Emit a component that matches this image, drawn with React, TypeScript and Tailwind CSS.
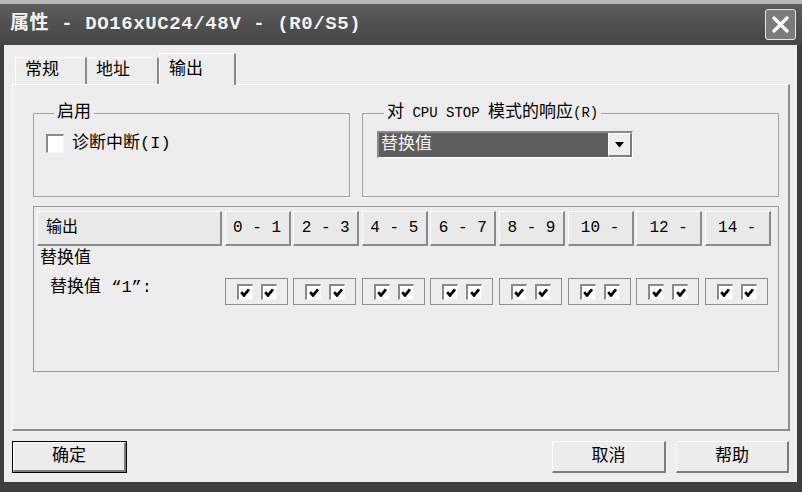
import React from "react";

const font = "font-['Liberation_Mono','Noto_Sans_CJK_SC',monospace]";

const ranges = ["0 - 1", "2 - 3", "4 - 5", "6 - 7", "8 - 9", "10 -", "12 -", "14 -"];

const Tick = () => (
  <svg width="10" height="9" viewBox="0 0 10 9">
    <path d="M1.2 4.2 L4 7.4 L9 1.3" fill="none" stroke="#000" strokeWidth="2.8" />
  </svg>
);

const Box = ({ checked, size = "w-[16px] h-[16px]" }: { checked?: boolean; size?: string }) => (
  <span
    className={`${size} flex items-center justify-center bg-white border-t-2 border-l-2 border-b border-r border-t-[#8a8a8a] border-l-[#8a8a8a] border-b-[#f6f6f6] border-r-[#f6f6f6]`}
  >
    {checked && <Tick />}
  </span>
);

const Button = ({ label, primary, w }: { label: string; primary?: boolean; w: string }) => (
  <button
    type="button"
    className={`${w} h-[32px] ${primary ? "border border-black" : ""} bg-[#ececec]`}
  >
    <span
      className={`h-full w-full flex items-center justify-center border-t border-l border-white border-b-2 border-r-2 border-b-[#7c7c7c] border-r-[#7c7c7c] text-[17px] text-black ${font}`}
    >
      {label}
    </span>
  </button>
);

export default function App() {
  return (
    <div className="w-[802px] h-[492px] flex flex-col bg-[#3e3e3e] overflow-hidden">
      <div className="h-[4px] bg-[#b8b8b8]" />

      {/* title bar */}
      <div className="h-[41px] flex items-center justify-between pl-[10px] pr-[6px] bg-linear-to-b from-[#5c5c5c] to-[#454545]">
        <span className={`text-[19px] font-bold text-[#f2f2f2] tracking-[0.6px] ${font}`}>
          属性 - DO16xUC24/48V - (R0/S5)
        </span>
        <span className="w-[31px] h-[31px] rounded-[3px] border border-[#e6e6e6] bg-[#7b7b7b] flex items-center justify-center">
          <svg width="17" height="17" viewBox="0 0 17 17">
            <path d="M2 2 L15 15 M15 2 L2 15" stroke="#fff" strokeWidth="3.2" strokeLinecap="round" />
          </svg>
        </span>
      </div>

      {/* window body */}
      <div className="h-[437px] ml-[4px] mr-[5px] bg-[#ededed] flex flex-col">
        {/* tabs */}
        <div className="h-[39px] pl-[11px] flex items-end">
          <div className={`w-[72px] h-[27px] border-t border-l border-white border-r-2 border-r-[#8a8a8a] flex items-center pl-[9px] text-[17px] text-black ${font}`}>
            常规
          </div>
          <div className={`w-[72px] h-[27px] border-t border-white border-r-2 border-r-[#8a8a8a] flex items-center pl-[9px] text-[17px] text-black ${font}`}>
            地址
          </div>
          <div className={`w-[77px] h-[32px] -mb-px bg-[#ededed] border-t border-l border-white border-r-2 border-r-[#8a8a8a] flex items-start pt-[3px] pl-[9px] text-[17px] text-black relative ${font}`}>
            输出
          </div>
        </div>

        {/* tab panel */}
        <div className="ml-[8px] w-[778px] h-[347px] border-t border-l border-white border-r-2 border-b-2 border-r-[#8e8e8e] border-b-[#8e8e8e] pl-[20px] pt-[18px]">
          <div className="flex gap-x-[12px]">
            <fieldset className="w-[317px] h-[94px] border border-[#a4a4a4] pl-[12px]">
              <legend className={`ml-[8px] px-[3px] text-[17px] leading-[20px] text-black ${font}`}>启用</legend>
              <label className={`mt-[8px] flex items-center gap-[8px] text-[17px] text-black ${font}`}>
                <Box size="w-[18px] h-[19px]" />
                诊断中断(I)
              </label>
            </fieldset>

            <fieldset className="w-[417px] h-[94px] border border-[#a4a4a4] pl-[14px]">
              <legend className={`ml-[7px] px-[3px] text-[17px] leading-[20px] text-black ${font}`}>
                对<span className="text-[14px]"> CPU STOP </span>模式的响应<span className="text-[14px]">(R)</span>
              </legend>
              <div className="mt-[8px] w-[256px] h-[27px] border-t-2 border-l-2 border-b border-r border-t-[#8a8a8a] border-l-[#8a8a8a] border-b-white border-r-white bg-white flex">
                <span className={`flex-1 bg-[#5e5e5e] text-[#f4f4f4] text-[17px] leading-[24px] pl-[2px] ${font}`}>替换值</span>
                <span className="w-[24px] bg-[#eeeeee] border-t border-l border-white border-b-2 border-r-2 border-b-[#7c7c7c] border-r-[#7c7c7c] flex items-center justify-center">
                  <svg width="9" height="6" viewBox="0 0 9 6">
                    <polygon points="0,0 9,0 4.5,5.5" fill="#000" />
                  </svg>
                </span>
              </div>
            </fieldset>
          </div>

          {/* output table */}
          <div className="mt-[9px] w-[746px] h-[166px] border border-[#9c9c9c] pl-[3px] pt-[4px]">
            <div className="flex gap-[2.6px]">
              <div className={`w-[185px] h-[35px] bg-[#e9e9e9] border-t border-l border-white border-b-2 border-r-2 border-b-[#8a8a8a] border-r-[#8a8a8a] flex items-center pl-[8px] text-[16px] text-black ${font}`}>
                输出
              </div>
              {ranges.map((r) => (
                <div
                  key={r}
                  className={`w-[66px] h-[35px] bg-[#e9e9e9] border-t border-l border-white border-b-2 border-r-2 border-b-[#8a8a8a] border-r-[#8a8a8a] flex items-center justify-center text-[16px] text-black ${font}`}
                >
                  {r}
                </div>
              ))}
            </div>

            <div className={`mt-[3px] pl-[3px] text-[17px] leading-[20px] text-black ${font}`}>替换值</div>

            <div className="mt-[9px] flex gap-[2.6px]">
              <div className={`w-[185px] pl-[13px] text-[17px] leading-[20px] text-black ${font}`}>替换值 “1”:</div>
              {ranges.map((r) => (
                <div key={r} className="w-[66px]">
                  <div className="w-[63px] h-[27px] border border-[#8e8e8e] flex items-center pl-[11px] gap-[8px]">
                    <Box checked />
                    <Box checked />
                  </div>
                </div>
              ))}
            </div>
          </div>
        </div>

        {/* buttons */}
        <div className="mt-[10px] px-[8px] flex items-center">
          <Button label="确定" primary w="w-[115px]" />
          <div className="flex-1" />
          <Button label="取消" w="w-[114px]" />
          <div className="w-[10px]" />
          <Button label="帮助" w="w-[113px]" />
        </div>
      </div>
    </div>
  );
}
